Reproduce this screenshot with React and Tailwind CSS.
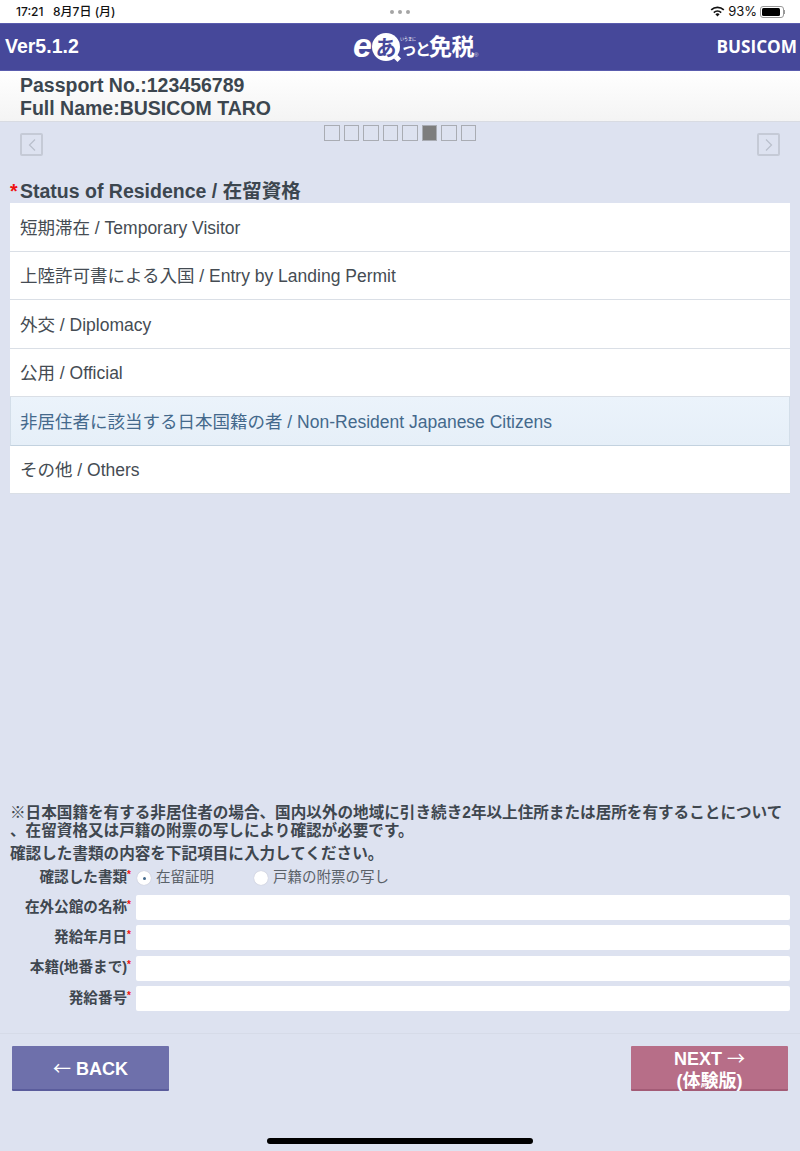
const font = { fontFamily: '"Liberation Sans", "Noto Sans CJK JP", sans-serif' };
const cjk = { fontFamily: '"Noto Sans CJK JP", sans-serif' };

function Row({ children, active }) {
  return (
    <div className={`h-[48.5px] flex items-center pt-[2px] text-[17.5px] border-b ${active ? "pl-[9px] bg-gradient-to-b from-[#ebf3fb] to-[#e6eff8] text-[#44698c] border-[#c3d2df] border-x border-x-[#d3dee9]" : "pl-[10px] bg-white text-[#454c53] border-[#dadfe6]"}`}>
      {children}
    </div>
  );
}

function Star() {
  return <span className="text-[#ee1111] text-[10px] align-top">*</span>;
}

function Field({ label }) {
  return (
    <div className="flex items-center h-[25px]">
      <div className="w-[121px] text-right text-[14.6px] font-bold text-[#3f474f] whitespace-nowrap">
        {label}<Star />
      </div>
      <div className="ml-[5px] flex-1 h-[25px] bg-white rounded-[2px]" />
    </div>
  );
}

function Radio({ on, label, cls }) {
  return (
    <div className={`flex items-center gap-[5px] ${cls}`}>
      <span className="w-[14px] h-[14px] rounded-full bg-white shadow-[0_0_1px_#aab] flex items-center justify-center">
        {on && <span className="w-[3px] h-[3px] rounded-full bg-[#44698c]" />}
      </span>
      <span className="text-[14.5px] text-[#5a6168]">{label}</span>
    </div>
  );
}

function Nav({ dir }) {
  return (
    <div className="w-[23px] h-[23px] border-2 border-[#c5cad6] rounded-[2px] flex items-center justify-center">
      <svg width="10" height="14" viewBox="0 0 10 14" fill="none" stroke="#b9bfcb" strokeWidth="1.2">
        <path d={dir === "l" ? "M8 1.5 2.5 7 8 12.5" : "M2 1.5 7.5 7 2 12.5"} />
      </svg>
    </div>
  );
}

export default function App() {
  return (
    <div style={font} className="relative w-[800px] h-[1151px] bg-[#dde2f0] overflow-hidden">
      {/* status bar */}
      <div className="h-[23px] bg-white flex items-center pl-[16px] pr-[15px] text-[12px] font-medium text-[#111]">
        <span className="w-[374px] whitespace-nowrap" style={{ fontFamily: 'Inter, "Noto Sans CJK JP", sans-serif' }}>17:21&nbsp;&nbsp;&nbsp;8月7日 (月)</span>
        <div className="flex gap-[4px] w-[26px]">
          <span className="w-[4px] h-[4px] rounded-full bg-[#a5a5a5]" />
          <span className="w-[4px] h-[4px] rounded-full bg-[#a5a5a5]" />
          <span className="w-[4px] h-[4px] rounded-full bg-[#a5a5a5]" />
        </div>
        <div className="ml-auto flex items-center gap-[3px]">
          <svg width="15" height="11" viewBox="0 0 15 11">
            <path d="M7.5 10.5 5.4 8.2a3 3 0 0 1 4.2 0Z" fill="#111" />
            <path d="M3.8 6.6a5.4 5.4 0 0 1 7.4 0" stroke="#111" strokeWidth="1.6" fill="none" />
            <path d="M1.2 3.9a9 9 0 0 1 12.6 0" stroke="#111" strokeWidth="1.6" fill="none" />
          </svg>
          <span className="text-[13px] font-normal" style={{ fontFamily: "Inter, sans-serif" }}>93%</span>
          <div className="flex items-center">
            <div className="w-[24px] h-[12px] border border-[#999] rounded-[3px] p-[1px]">
              <div className="h-full w-[90%] bg-black rounded-[1.5px]" />
            </div>
            <div className="w-[1px] h-[4px] bg-[#999]" />
          </div>
        </div>
      </div>

      {/* header */}
      <div className="h-[48px] bg-[#46489a] border-y border-[#5a5cae] flex items-center justify-between pl-[5px] pr-[3px]">
        <span className="text-white font-bold text-[19.5px]">Ver5.1.2</span>
        <div className="absolute left-[353px] top-[24px] h-[48px] flex items-center text-white font-bold">
          <span className="italic text-[34px] leading-none mt-[-6px] w-[19px]">e</span>
          <span className="relative w-[28px] h-[28px] rounded-full bg-white text-[#46489a] text-[21px] leading-none flex items-center justify-center mt-[-2px]">
            <span className="absolute right-[0px] bottom-[0px] w-[5px] h-[5px] bg-white rotate-45" />
            <span className="relative">あ</span>
          </span>
          <span className="relative text-[16px] leading-[16px] mt-[3px] ml-[1px] tracking-[-2px] whitespace-nowrap">
            <span className="absolute left-[-1px] bottom-full text-[4px] leading-[5px] tracking-normal font-normal">いうまに</span>
            っと
          </span>
          <span className="text-[23px] tracking-[-0.5px] whitespace-nowrap leading-none mt-[-2px]">免税</span>
          <span className="text-[6px] font-normal mt-[14px] opacity-70">®</span>
        </div>
        <span className="text-white font-bold text-[17.2px]" style={{ fontFamily: '"Open Sans", sans-serif' }}>BUSICOM</span>
      </div>

      {/* passenger */}
      <div className="h-[51px] bg-gradient-to-b from-white to-[#f4f4f4] border-b border-[#d8dbe2] pl-[20px] pt-[3px] text-[19.5px] leading-[23px] font-bold text-[#3c464f]">
        <div>Passport No.:123456789</div>
        <div>Full Name:BUSICOM TARO</div>
      </div>

      {/* pager */}
      <div className="relative h-[59px] px-[20px] pt-[11px] flex justify-between">
        <Nav dir="l" />
        <div className="absolute left-[324px] top-[3px] flex gap-[4px]">
          {[0, 1, 2, 3, 4, 5, 6, 7].map((i) => (
            <div key={i} className={`w-[15.5px] h-[15.5px] border-[1.5px] border-[#a9acb3] ${i === 5 ? "bg-[#7d7d7d] border-[#8c8c8c]" : ""}`} />
          ))}
        </div>
        <Nav dir="r" />
      </div>

      {/* title */}
      <div className="h-[22px] pl-[10px] flex items-center text-[19.5px] font-bold text-[#3c464f] whitespace-nowrap">
        <span className="text-[#ee1111] w-[10px]">*</span>Status of Residence / 在留資格
      </div>

      {/* list */}
      <div className="mx-[10px]">
        <Row>短期滞在 / Temporary Visitor</Row>
        <Row>上陸許可書による入国 / Entry by Landing Permit</Row>
        <Row>外交 / Diplomacy</Row>
        <Row>公用 / Official</Row>
        <Row active>非居住者に該当する日本国籍の者 / Non-Resident Japanese Citizens</Row>
        <Row>その他 / Others</Row>
      </div>

      {/* notes */}
      <div className="mt-[310px] pl-[10px] text-[15.6px] leading-[18px] font-bold text-[#3f474f] whitespace-nowrap">
        <div>※日本国籍を有する非居住者の場合、国内以外の地域に引き続き2年以上住所または居所を有することについて</div>
        <div>、在留資格又は戸籍の附票の写しにより確認が必要です。</div>
        <div className="mt-[5px]">確認した書類の内容を下記項目に入力してください。</div>
      </div>

      <div className="pl-[10px] pr-[10px] mt-[4px]">
        <div className="flex items-center h-[22px]">
          <div className="w-[121px] text-right text-[14.6px] font-bold text-[#3f474f] whitespace-nowrap">
            確認した書類<Star />
          </div>
          <Radio on label="在留証明" cls="ml-[6px] w-[117px]" />
          <Radio label="戸籍の附票の写し" />
        </div>
        <div className="flex flex-col gap-[5.4px] mt-[6px]">
          <Field label="在外公館の名称" />
          <Field label="発給年月日" />
          <Field label="本籍(地番まで)" />
          <Field label="発給番号" />
        </div>
      </div>

      <div className="h-[1px] bg-[#d6dbe8] mt-[22px]" />

      {/* buttons */}
      <div className="flex justify-between px-[12px] mt-[12px]">
        <div className="w-[157px] h-[45px] pt-[2px] bg-[#6e70ab] border-b-2 border-[#5a5c9c] rounded-[1px] text-white font-bold text-[18px] flex items-center justify-center">
          <span><span className="font-normal" style={cjk}>←</span> BACK</span>
        </div>
        <div className="w-[157px] h-[45px] pt-[2px] bg-[#b76e88] border-b-2 border-[#a35b76] rounded-[1px] text-white font-bold text-[18px] leading-[22px] flex flex-col items-center justify-center">
          <span>NEXT <span className="font-normal" style={cjk}>→</span></span>
          <span>(体験版)</span>
        </div>
      </div>

      {/* home indicator */}
      <div className="absolute left-[267px] bottom-[7px] w-[266px] h-[6px] rounded-full bg-black" />
    </div>
  );
}
